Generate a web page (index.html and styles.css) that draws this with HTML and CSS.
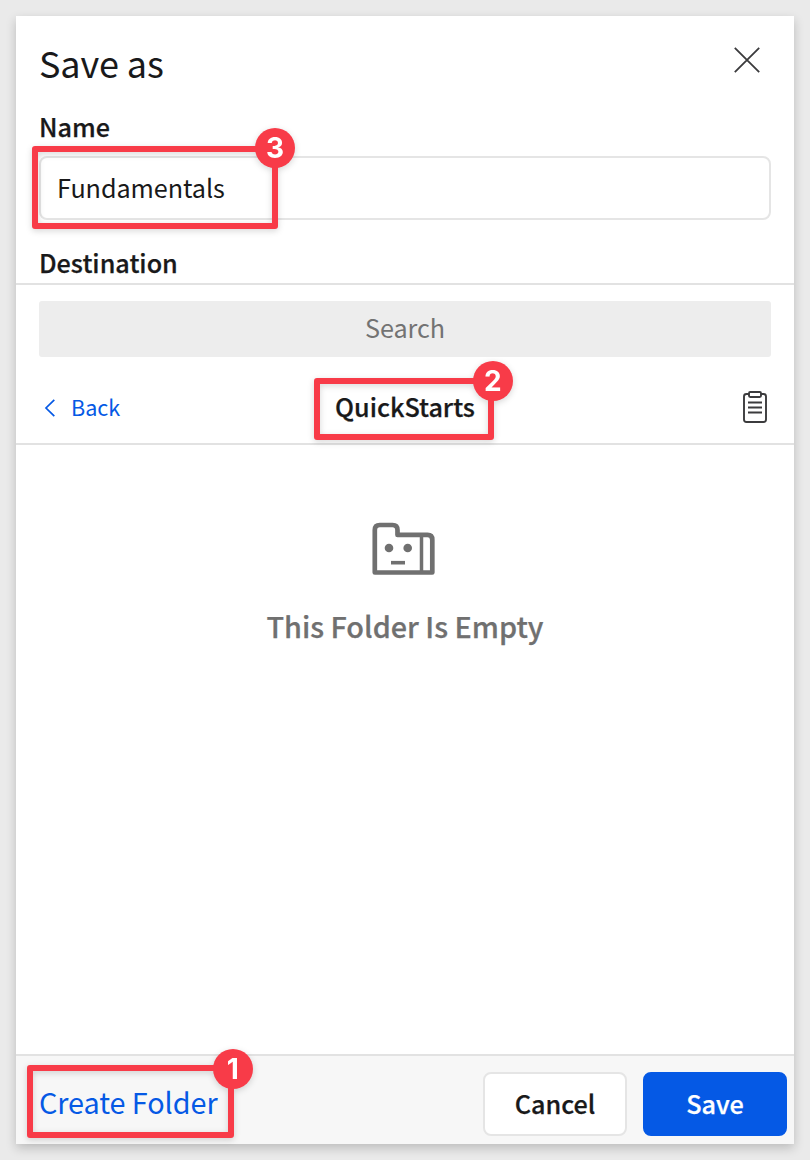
FILE: index.html
```html
<!DOCTYPE html>
<html lang="en">
<head>
<meta charset="utf-8">
<title>Save as</title>
<link rel="stylesheet" href="styles.css">
</head>
<body>
<main class="dialog">
  <header class="dialog-header">
    <h1 class="title"><span>Save as</span></h1>
    <button class="icon-button close" aria-label="Close">
      <svg width="28" height="28" viewBox="0 0 28 28" fill="none" stroke="#3b3b3d" stroke-width="1.8"><path d="M1.8 1.8 26.2 26.2M26.2 1.8 1.8 26.2"/></svg>
    </button>
  </header>
  <label class="field-label name-label" for="name">Name</label>
  <div class="field">
    <input class="name-input" id="name" type="text" value="Fundamentals">
    <div class="callout callout-name"><span class="badge">3</span></div>
  </div>
  <div class="field-label destination-label">Destination</div>
  <section class="browser">
    <div class="search">Search</div>
    <nav class="folder-nav">
      <a class="back">
        <svg width="12" height="20" viewBox="0 0 12 20" fill="none" stroke="#0559e5" stroke-width="1.7"><path d="M10.3 1.8 2 10l8.3 8.2"/></svg>
        <span>Back</span>
      </a>
      <div class="folder-name"><span>QuickStarts</span>
        <div class="callout callout-folder"><span class="badge">2</span></div>
      </div>
      <button class="icon-button clipboard" aria-label="Clipboard">
        <svg width="26" height="34" viewBox="0 0 26 34" fill="none" stroke="#3b3b3d" stroke-width="1.9"><path d="M7 4H4.500Q2 4 2 6.500V29.500Q2 32 4.500 32H21.500Q24 32 24 29.500V6.500Q24 4 21.500 4H19"/><rect x="7" y="2" width="12" height="5" rx="1.200"/><path d="M6 12.500H20M6 17.500H20M6 22.500H20"/></svg>
      </button>
    </nav>
  </section>
  <section class="empty">
    <svg class="empty-icon" width="64" height="54" viewBox="0 0 64 54" fill="none" stroke="#707070"><path stroke-width="4.700" d="M2.800 50.500V8Q2.800 3 7.800 3H20.500Q25.500 3 25.500 8V12.900H55.500Q60.300 12.900 60.300 17.700V50.500Z" stroke-linejoin="round"/><path stroke-width="3.500" d="M49.500 13V50"/><circle cx="17" cy="26" r="4.300" fill="#707070" stroke="none"/><circle cx="35.700" cy="26" r="4.300" fill="#707070" stroke="none"/><path stroke-width="3.600" d="M19 40.700H33"/></svg>
    <h2 class="empty-text">This Folder Is Empty</h2>
  </section>
  <footer class="dialog-footer">
    <div class="create"><a class="create-link">Create Folder</a>
      <div class="callout callout-create"><span class="badge">1</span></div>
    </div>
    <div class="actions">
      <button class="button cancel">Cancel</button>
      <button class="button save">Save</button>
    </div>
  </footer>
</main>
</body>
</html>
```
FILE: styles.css
```css
* { box-sizing: border-box; }

body {
  margin: 0;
  height: 1160px;
  padding: 16px;
  overflow: hidden;
  background: #eaeaea;
  color: #19191a;
  font-family: "Noto Sans CJK SC", sans-serif;
}

button, input { font-family: inherit; color: inherit; }

.dialog {
  display: flex;
  flex-direction: column;
  height: 1128px;
  background: #fff;
  box-shadow: 0 4px 10px rgba(0, 0, 0, .2);
}

.dialog-header {
  display: flex;
  justify-content: space-between;
  align-items: flex-start;
  height: 92px;
  padding: 26px 32px 0 23px;
}

.title {
  margin: 0;
  font-size: 36px;
  font-weight: 400;
  letter-spacing: -.1px;
  line-height: 40px;
}

.icon-button {
  display: flex;
  padding: 0;
  border: 0;
  background: none;
}

.close { margin: 4px 1px 0 0; }

.field-label,
.folder-name > span,
.empty-text,
.button { -webkit-text-stroke: .25px currentColor; }

.field-label {
  padding-left: 23px;
  font-size: 25.2px;
  font-weight: 500;
  line-height: 36px;
}

.name-label { height: 48px; }

.field {
  position: relative;
  padding: 0 23px;
}

.name-input {
  display: block;
  width: 100%;
  height: 64px;
  padding: 0 16px 2px;
  border: 2px solid #e5e5e5;
  border-radius: 8px;
  background: #fff;
  font-size: 25.2px;
  letter-spacing: -.07px;
}

.destination-label {
  height: 63px;
  padding-top: 24px;
}

.browser {
  padding: 16px 23px 0;
  border-top: 2px solid #e2e2e2;
  border-bottom: 2px solid #e2e2e2;
}

.search {
  height: 56px;
  border-radius: 3px;
  background: #ededed;
  color: #737373;
  font-size: 25.2px;
  letter-spacing: -.07px;
  line-height: 53px;
  text-align: center;
}

.folder-nav {
  display: grid;
  grid-template-columns: 1fr auto 1fr;
  align-items: center;
  height: 86px;
  padding-top: 14px;
}

.back {
  display: flex;
  align-items: center;
  gap: 15px;
  margin-top: 2px;
  padding-left: 5px;
  color: #0559e5;
  font-size: 21.6px;
  line-height: 32px;
}

.back span { margin-top: -3px; }

.folder-name {
  position: relative;
  margin-top: -2px;
  font-size: 25.2px;
  font-weight: 500;
  line-height: 36px;
}

.clipboard { justify-self: end; margin-right: 3px; }

.empty {
  display: flex;
  flex: 1;
  flex-direction: column;
  align-items: center;
  gap: 30px;
  padding-top: 77px;
  color: #707070;
}

.empty-icon { margin-right: 3px; }

.empty-text {
  margin: 0;
  font-size: 28.8px;
  font-weight: 500;
  line-height: 40px;
}

.dialog-footer {
  display: flex;
  justify-content: space-between;
  height: 90px;
  padding: 16px 7px 0 23px;
  border-top: 2px solid #e2e2e2;
  background: #f7f7f7;
}

.create { position: relative; }

.create-link {
  color: #0559e5;
  font-size: 28.8px;
  letter-spacing: -.07px;
  line-height: 60px;
}

.actions { display: flex; gap: 16px; }

.button {
  width: 144px;
  height: 64px;
  padding: 0 0 2px;
  border: 2px solid #e5e5e5;
  border-radius: 8px;
  background: #fff;
  font-size: 25.2px;
  font-weight: 500;
}

.save {
  border-color: #0559e5;
  background: #0559e5;
  color: #fff;
}

.callout {
  position: absolute;
  border: 6px solid #f83b48;
  border-radius: 3px;
  filter: drop-shadow(0 2px 3px rgba(0, 0, 0, .16));
}

.callout-name { left: 15.6px; top: -10px; width: 246.4px; height: 83px; }
.callout-folder { left: -21px; top: -10.4px; width: 180.4px; height: 62px; }
.callout-create { left: -12px; top: -6.8px; width: 207.4px; height: 72.6px; }

.badge {
  position: absolute;
  top: -24px;
  right: -23px;
  width: 40px;
  height: 40px;
  border-radius: 50%;
  background: #f83b48;
  color: #fff;
  font: 700 28px/40px Inter, sans-serif;
  text-align: center;
}

.callout-folder .badge { top: -23px; right: -24.5px; }
.callout-create .badge { top: -22px; right: -24.4px; }
```
